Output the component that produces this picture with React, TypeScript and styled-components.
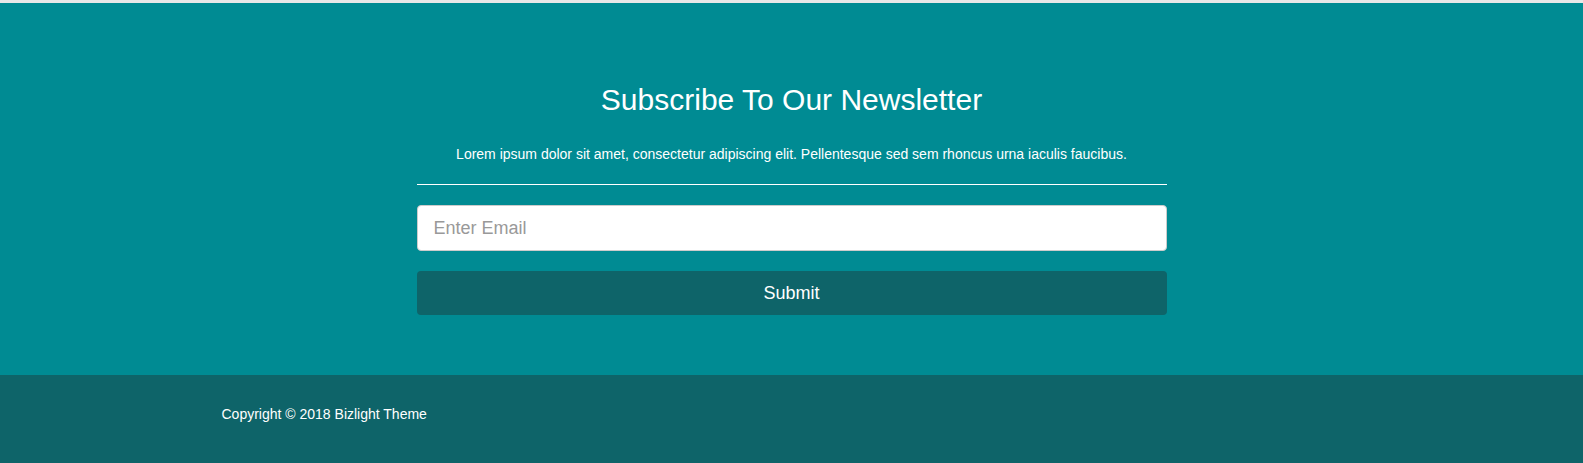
import styled, { createGlobalStyle } from 'styled-components';

const GlobalStyle = createGlobalStyle`
  html, body {
    margin: 0;
    padding: 0;
    background: #e8e8e8;
    font-family: "Liberation Sans", Arial, sans-serif;
  }
  * { box-sizing: border-box; }
`;

const Page = styled.div`
  padding-top: 3px;
`;

const NewsletterSection = styled.section`
  background: #008b93;
  padding: 60px 0 60px;
`;

const Container = styled.div`
  width: 1170px;
  margin: 0 auto;
  padding: 0 15px;
`;

const Column = styled.div`
  width: 750px;
  margin: 0 auto;
  text-align: center;
  color: #fff;
`;

const Heading = styled.h2`
  margin: 20px 0 0;
  font-size: 30px;
  line-height: 33px;
  font-weight: 400;
`;

const Lead = styled.p`
  margin: 28px 0 0;
  font-size: 14px;
  line-height: 20px;
`;

const Divider = styled.hr`
  margin: 20px 0 20px;
  border: 0;
  border-top: 1px solid #fff;
`;

const Form = styled.form`
  display: flex;
  flex-direction: column;
  gap: 20px;
`;

const EmailInput = styled.input`
  height: 46px;
  width: 100%;
  padding: 0 16px;
  border: 1px solid #ccc;
  border-radius: 4px;
  background: #fff;
  font-family: inherit;
  font-size: 18px;
  color: #555;
  outline: none;

  &::placeholder {
    color: #999;
  }
`;

const SubmitButton = styled.button`
  height: 44px;
  width: 100%;
  border: 0;
  border-radius: 4px;
  background: #0e6469;
  color: #fff;
  font-family: inherit;
  font-size: 18px;
  cursor: pointer;
`;

const Footer = styled.footer`
  background: #0e6469;
  padding: 29px 0 39px;
`;

const Copyright = styled.p`
  margin: 0;
  color: #fff;
  font-size: 14px;
  line-height: 20px;
`;

const App = () => {
  return (
    <Page>
      <GlobalStyle />
      <NewsletterSection>
        <Container>
          <Column>
            <Heading>Subscribe To Our Newsletter</Heading>
            <Lead>
              Lorem ipsum dolor sit amet, consectetur adipiscing elit. Pellentesque sed sem rhoncus urna iaculis faucibus.
            </Lead>
            <Divider />
            <Form onSubmit={e => e.preventDefault()}>
              <EmailInput type="email" placeholder="Enter Email" />
              <SubmitButton type="submit">Submit</SubmitButton>
            </Form>
          </Column>
        </Container>
      </NewsletterSection>
      <Footer>
        <Container>
          <Copyright>Copyright © 2018 Bizlight Theme</Copyright>
        </Container>
      </Footer>
    </Page>
  );
};

export default App;
